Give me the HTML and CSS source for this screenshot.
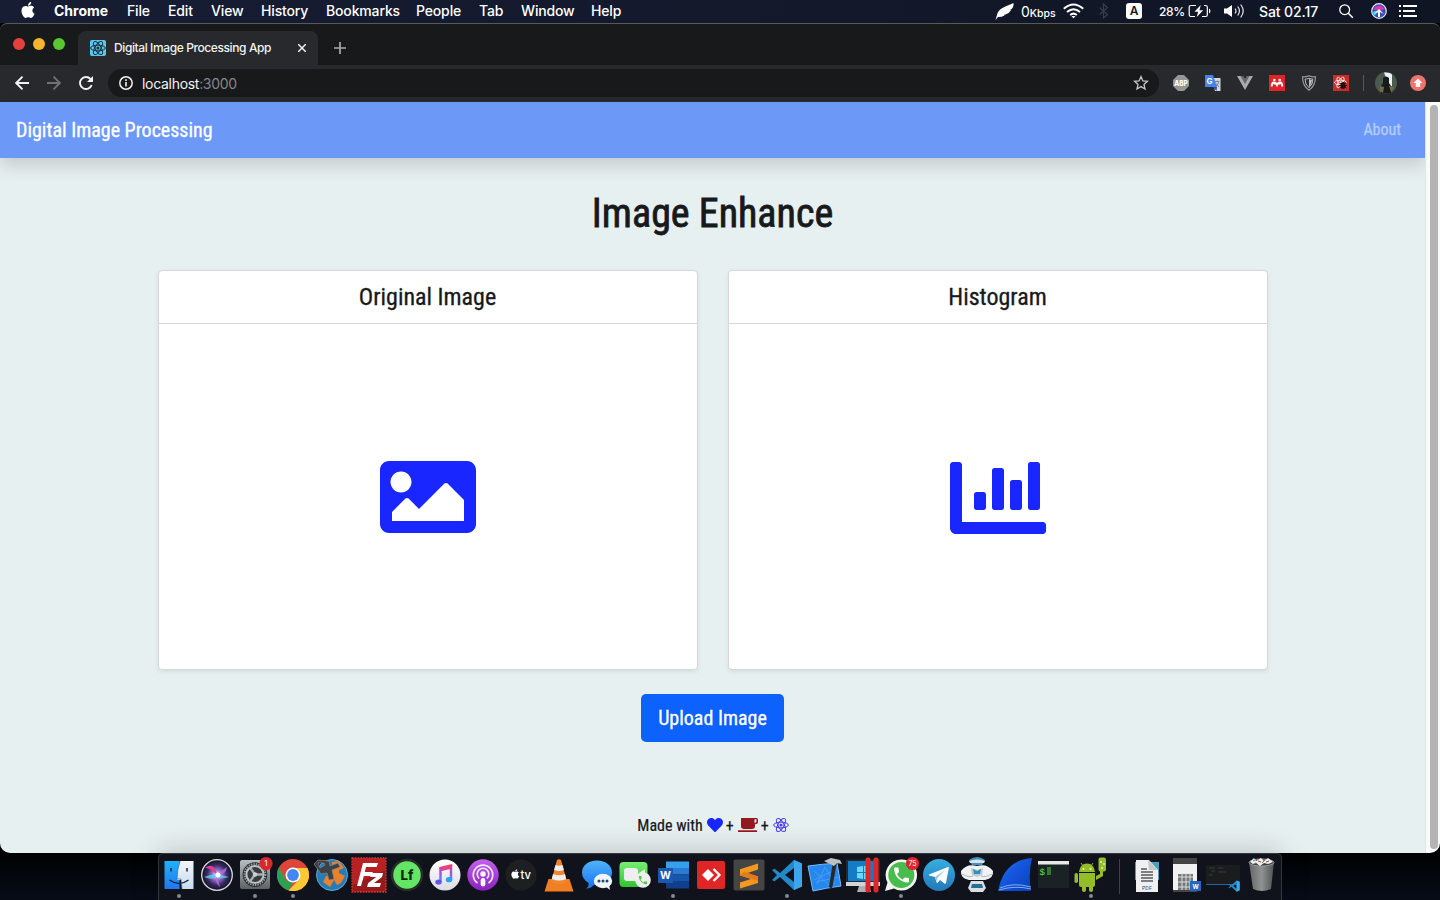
FILE: index.html
```
<!DOCTYPE html>
<html lang="en">
<head>
<meta charset="utf-8">
<title>Digital Image Processing App</title>
<link rel="stylesheet" href="styles.css">
</head>
<body>
<svg class="defs" aria-hidden="true">
  <defs>
    <symbol id="react" viewBox="0 0 24 24"><g fill="none" stroke="currentColor" stroke-width="1.5"><ellipse cx="12" cy="12" rx="11" ry="4.3"/><ellipse cx="12" cy="12" rx="11" ry="4.3" transform="rotate(60 12 12)"/><ellipse cx="12" cy="12" rx="11" ry="4.3" transform="rotate(120 12 12)"/></g><circle cx="12" cy="12" r="2.3" fill="currentColor"/></symbol>
    <symbol id="phone" viewBox="0 0 24 24"><path fill="currentColor" d="M6.620 10.790c1.440 2.830 3.760 5.140 6.590 6.590l2.200-2.200c.27-.27.67-.36 1.020-.24 1.120.37 2.330.57 3.570.57.55 0 1 .45 1 1V20c0 .55-.45 1-1 1-9.390 0-17-7.610-17-17 0-.55.45-1 1-1h3.500c.55 0 1 .45 1 1 0 1.250.2 2.450.57 3.570.11.35.03.74-.25 1.020z"/></symbol>
    <symbol id="apple" viewBox="0 0 24 24"><path fill="currentColor" d="M12.152 6.896c-.948 0-2.415-1.078-3.960-1.040-2.040.027-3.910 1.183-4.961 3.014-2.117 3.675-.546 9.103 1.519 12.090 1.013 1.454 2.208 3.090 3.792 3.039 1.520-.065 2.090-.987 3.935-.987 1.831 0 2.350.987 3.960.948 1.637-.026 2.676-1.480 3.676-2.948 1.156-1.688 1.636-3.325 1.662-3.415-.039-.013-3.182-1.221-3.220-4.857-.026-3.040 2.480-4.494 2.597-4.559-1.429-2.090-3.623-2.324-4.390-2.376-2-.156-3.675 1.090-4.610 1.090zM15.530 3.830c.843-1.012 1.400-2.427 1.245-3.830-1.207.052-2.662.805-3.532 1.818-.78.896-1.454 2.338-1.273 3.714 1.338.104 2.715-.688 3.559-1.701"/></symbol>
    <symbol id="vscode" viewBox="0 0 32 32"><path d="M23 1 9 14 3.500 9.700 1 11l5 5-5 5 2.500 1.300L9 18l14 13 8-3.500v-23zM23 9v14l-9-7z" fill="#2489ca" fill-rule="evenodd"/><path d="M23 1v30l8-3.500v-23z" fill="#3ba5ee"/></symbol>
    <linearGradient id="gBlue" x2="0" y2="1"><stop stop-color="#4eb4fb"/><stop offset="1" stop-color="#1973f0"/></linearGradient>
    <linearGradient id="gGreen" x2="0" y2="1"><stop stop-color="#77ee73"/><stop offset="1" stop-color="#2fc52e"/></linearGradient>
    <linearGradient id="gPurple" x2="0" y2="1"><stop stop-color="#c560ee"/><stop offset="1" stop-color="#8a21bf"/></linearGradient>
    <linearGradient id="gWhite" x2="0" y2="1"><stop stop-color="#fff"/><stop offset="1" stop-color="#dcdce4"/></linearGradient>
    <linearGradient id="gMetal" x2="0" y2="1"><stop stop-color="#b9bec2"/><stop offset="1" stop-color="#5d6265"/></linearGradient>
    <linearGradient id="gNote" x2="0" y2="1"><stop stop-color="#fa3c69"/><stop offset=".5" stop-color="#a354e8"/><stop offset="1" stop-color="#2aa5f5"/></linearGradient>
    <linearGradient id="gFin" x2="0" y2="1"><stop stop-color="#1fb2fa"/><stop offset="1" stop-color="#2277f0"/></linearGradient>
    <linearGradient id="gFin2" x2="0" y2="1"><stop stop-color="#f2f5fa"/><stop offset="1" stop-color="#c9dbee"/></linearGradient>
    <linearGradient id="gShark" x2="1" y2="1"><stop stop-color="#2d8cf5"/><stop offset=".4" stop-color="#1558e0"/><stop offset="1" stop-color="#0b3dbd"/></linearGradient>
    <linearGradient id="gTele" x2="0" y2="1"><stop stop-color="#37aee2"/><stop offset="1" stop-color="#2378b8"/></linearGradient>
    <linearGradient id="gBin"><stop stop-color="#666"/><stop offset=".5" stop-color="#8e9292"/><stop offset="1" stop-color="#505354"/></linearGradient>
    <radialGradient id="gSiri"><stop stop-color="#fff"/><stop offset=".3" stop-color="#9b7bd0"/><stop offset=".65" stop-color="#3b2a66"/><stop offset="1" stop-color="#0d1420"/></radialGradient>
  </defs>
</svg>
<div class="desktop">
  <header class="menubar">
    <svg class="apple"><use href="#apple"/></svg>
    <nav class="menus"><b>Chrome</b><span>File</span><span>Edit</span><span>View</span><span>History</span><span>Bookmarks</span><span>People</span><span>Tab</span><span>Window</span><span>Help</span></nav>
    <div class="status">
      <svg width="20" height="18" viewBox="0 0 20 18"><path d="M.5 18 2 13C3 7 9 5 18.500 1q.5 4-2.500 6.500l-1 .3 1 .5q-2 3.500-6 4.500l-1-.2.500.900Q7 15 3 15z" fill="#fff"/></svg>
      <span class="net">0<small>Kbps</small></span>
      <svg width="21" height="16" viewBox="0 0 21 16" fill="none" stroke="#fff" stroke-width="2"><path d="M.8 5.800q9.700-8.500 19.400 0M4 9q6.500-5.600 13 0M7.200 12q3.300-2.700 6.600 0"/><path d="m8.500 13 2 2.500 2-2.500z" fill="#fff" stroke="none"/></svg>
      <svg width="12" height="16" viewBox="0 0 12 16" fill="none" stroke="#3a3e4b" stroke-width="1.200"><path d="m1.500 4.500 8 7-4 3.500V1l4 3.500-8 7"/></svg>
      <span class="lang">A</span>
      <span class="pct">28%</span>
      <svg width="24" height="14" viewBox="0 0 24 14"><path d="M8 1.500H3Q1.200 1.500 1.200 3v8q0 1.500 1.800 1.500h4M14 12.500h3.500q1.800 0 1.800-1.500V3q0-1.500-1.800-1.500H16" fill="none" stroke="#fff" stroke-width="1.200"/><path d="M12.800 1 6.500 7.700h3.700L8.700 13l6.500-6.700h-3.800zM21 4.500c1.900.8 1.900 4.200 0 5z" fill="#fff"/></svg>
      <svg width="22" height="16" viewBox="0 0 22 16"><path d="M0 5.500h3L8 2v12l-5-3.500H0z" fill="#fff"/><path d="M11 5.500q2 2.500 0 5M13.700 3.500q3.500 4.500 0 9M16.700 1.500q5 6.500 0 13" fill="none" stroke="#e4e5ea" stroke-width="1.200"/></svg>
      <span class="clock">Sat 02.17</span>
      <svg width="16" height="16" viewBox="0 0 16 16" fill="none" stroke="#fff" stroke-width="1.300"><circle cx="6.700" cy="6.700" r="4.900"/><path d="m10.300 10.300 4.500 4.500" stroke-width="1.600"/></svg>
      <svg width="16" height="16" viewBox="0 0 16 16"><circle cx="8" cy="8" r="7.300" fill="#3d4cb0" stroke="#e8e8f4" stroke-width="1.200"/><path d="M2 6q6-7 12 0L8 8z" fill="#d63bad"/><path d="M2 10q0-3 6-2l-5 5z" fill="#3bd3e8"/><path d="m8 6 5 5-4-2v5H7V9l-4 2z" fill="#fff"/></svg>
      <svg width="19" height="14" viewBox="0 0 19 14" stroke="#fff" stroke-width="2"><path d="M0 2h2M0 7h2M0 12h2M4 2h14M4 7h12M4 12h14"/></svg>
    </div>
  </header>

  <section class="window">
    <div class="tabstrip">
      <div class="lights"><i class="red"></i><i class="yellow"></i><i class="green"></i></div>
      <div class="tab">
        <span class="favicon"><svg width="16" height="16"><use href="#react"/></svg></span>
        <span class="tab-title">Digital Image Processing App</span>
        <svg class="close" width="8" height="8" viewBox="0 0 8 8"><path d="m0 0 8 8M8 0 0 8" stroke="#f0f0f0" stroke-width="1.500"/></svg>
      </div>
      <svg class="plus" width="12" height="12" viewBox="0 0 12 12"><path d="M6 0v12M0 6h12" stroke="#a6abb0" stroke-width="1.700"/></svg>
    </div>
    <div class="toolbar">
      <div class="navicons">
        <svg width="14" height="14" viewBox="0 0 14 14" fill="none" stroke="#f1f3f4" stroke-width="1.900"><path d="M14 7H1.500M7.500 .7 1.200 7l6.300 6.300"/></svg>
        <svg width="14" height="14" viewBox="0 0 14 14" fill="none" stroke="#6f7275" stroke-width="1.900"><path d="M0 7h12.500M6.500 .7 12.800 7l-6.300 6.300"/></svg>
        <svg width="14" height="14" viewBox="0 0 14 14"><path d="M11.500 3A6 6 0 1 0 12.700 9" fill="none" stroke="#f1f3f4" stroke-width="1.900"/><path d="M14 0v6H8z" fill="#f1f3f4"/></svg>
      </div>
      <div class="omnibox">
        <svg width="14" height="14" viewBox="0 0 14 14"><circle cx="7" cy="7" r="6.200" fill="none" stroke="#f1f3f4" stroke-width="1.500"/><path d="M6.200 6h1.600v4.500H6.200zM6.200 3.300h1.600v1.600H6.200z" fill="#f1f3f4"/></svg>
        <span class="url">localhost<em>:3000</em></span>
        <svg class="star" width="16" height="16" viewBox="0 0 16 16"><path d="m8 1.600 1.900 4.300 4.500.4-3.400 3.100 1 4.600-4-2.400L4 14l1-4.600-3.400-3.100 4.500-.4z" fill="none" stroke="#c4c6c9" stroke-width="1.300"/></svg>
      </div>
      <div class="extensions">
        <svg viewBox="0 0 16 16"><path d="M5 0h6l5 5v6l-5 5H5l-5-5V5z" fill="#969696"/><text x="1.300" y="10.700" font-size="7.500" font-weight="800" textLength="13.500" lengthAdjust="spacingAndGlyphs" fill="#fff">ABP</text></svg>
        <svg viewBox="0 0 16 16"><path d="M7 3h8.500v13H10z" fill="#d6d8db"/><path d="M9.500 6.500h5M12 5.500v1M10 12q3.500-2 3.500-5M10.500 8l3.500 4" stroke="#708095" fill="none"/><path d="M0 0h8l4 12H0z" fill="#4584ee"/><path d="m8 12 3.500 4L12 12z" fill="#2b50a5"/><text x="1.500" y="9" font-size="8" font-weight="700" fill="#fff">G</text></svg>
        <svg viewBox="0 0 16 16"><path d="M0 1h6l2 3.500L10 1h6L8 15z" fill="#aaa"/><path d="M3.500 1H6l2 3.500L10 1h2.500L8 9z" fill="#646668"/></svg>
        <svg viewBox="0 0 16 16"><path d="M0 0h16v16H0z" fill="#e22428"/><g fill="none" stroke="#fff" stroke-width="1.900"><path d="M2.800 11.500q-.2-4 2.200-4 2 0 3 2.500 1-2.500 3-2.500 2.400 0 2.200 4M5.500 9.500v-2M10.500 9.500v-2"/></g><circle cx="5.300" cy="5" r="1.300" fill="#fff"/><circle cx="10.700" cy="5" r="1.300" fill="#fff"/></svg>
        <svg viewBox="0 0 16 16"><path d="M8 .7q3.500 1.600 6.500 1.100Q14.500 11 8 15.300 1.500 11 1.500 1.800 4.500 2.300 8 .7z" fill="none" stroke="#999" stroke-width="1.200"/><path d="M8 3.200q2.500 1 4 .9Q12 9.500 8 12.700 4 9.500 4 4.100q1.500.1 4-.9z" fill="none" stroke="#bbb"/><path d="M8 4v8q3-3 3-7z" fill="#bbb"/></svg>
        <svg viewBox="0 0 16 16"><path d="M0 0h16v16H0z" fill="#cc2c29"/><use href="#react" x="1" y="1" width="13" height="13" color="#fff"/><ellipse cx="10" cy="10.500" rx="2.500" ry="3.500" fill="#210e10"/><path d="m6.500 8 7 5M6.500 13l7-5M6 10.500h8" stroke="#210e10"/></svg>
      </div>
      <i class="divider"></i>
      <svg class="avatar" viewBox="0 0 22 22"><circle cx="11" cy="11" r="11" fill="#4c5b50"/><path d="M9 .5q6-.5 8 2V14h-3z" fill="#edf3f4"/><path d="M8 6q3-3 6 0v5l2 3v7.500H6V14l2-3z" fill="#191b18"/><path d="m5 14 4 1-1 6-3-2zM14 14l5 1-3 5z" fill="#716e4b"/></svg>
      <svg class="update" viewBox="0 0 16 16"><circle cx="8" cy="8" r="8" fill="#ee756d"/><path d="m8 3.500 4.500 4.500h-2.300v4H5.800V8H3.500z" fill="#fff"/></svg>
    </div>

    <div class="viewport">
      <main class="page">
        <nav class="navbar"><a class="brand">Digital Image Processing</a><a class="about">About</a></nav>
        <h1>Image Enhance</h1>
        <div class="cards">
          <article class="card"><h4>Original Image</h4><div class="card-body"><svg class="img-icon" viewBox="0 0 512 512"><path d="M464 448H48c-26.510 0-48-21.490-48-48V112c0-26.510 21.490-48 48-48h416c26.510 0 48 21.490 48 48v288c0 26.510-21.490 48-48 48zM112 120c-30.928 0-56 25.072-56 56s25.072 56 56 56 56-25.072 56-56-25.072-56-56-56zM64 384h384V272l-87.515-87.515c-4.686-4.686-12.284-4.686-16.971 0L208 320l-55.515-55.515c-4.686-4.686-12.284-4.686-16.971 0L64 336v48z"/></svg></div></article>
          <article class="card"><h4>Histogram</h4><div class="card-body"><svg viewBox="0 0 512 512"><path d="M332.800 320h38.400c6.400 0 12.800-6.400 12.800-12.800V172.800c0-6.400-6.400-12.800-12.800-12.800h-38.400c-6.400 0-12.800 6.400-12.800 12.800v134.400c0 6.400 6.400 12.800 12.800 12.800zm96 0h38.400c6.400 0 12.800-6.400 12.800-12.800V76.800c0-6.400-6.400-12.800-12.800-12.800h-38.400c-6.400 0-12.800 6.400-12.800 12.800v230.400c0 6.400 6.400 12.800 12.800 12.800zm-288 0h38.400c6.400 0 12.800-6.400 12.800-12.800v-70.400c0-6.400-6.400-12.800-12.800-12.800h-38.400c-6.400 0-12.800 6.400-12.800 12.800v70.400c0 6.400 6.400 12.800 12.800 12.800zm96 0h38.400c6.400 0 12.800-6.400 12.800-12.800V108.800c0-6.400-6.400-12.800-12.800-12.800h-38.400c-6.400 0-12.800 6.400-12.800 12.800v198.400c0 6.400 6.400 12.800 12.800 12.800zM496 384H64V80c0-8.840-7.160-16-16-16H16C7.160 64 0 71.160 0 80v336c0 17.670 14.330 32 32 32h464c8.840 0 16-7.160 16-16v-32c0-8.840-7.160-16-16-16z"/></svg></div></article>
        </div>
        <button class="upload">Upload Image</button>
        <footer class="credit">
          <span>Made with</span>
          <svg width="16" height="16" viewBox="0 0 512 512"><path fill="#1a26ff" d="M462.300 62.600C407.500 15.900 326 24.300 275.700 76.200L256 96.500l-19.700-20.300C186.100 24.300 104.500 15.900 49.700 62.600c-62.800 53.600-66.100 149.800-9.900 207.900l193.500 199.800c12.500 12.900 32.800 12.900 45.300 0l193.500-199.800c56.300-58.100 53-154.300-9.800-207.900z"/></svg>
          <span>+</span>
          <svg width="20" height="14" viewBox="0 0 20 14"><path fill="#931a20" fill-rule="evenodd" d="M3 0h15.500Q20 0 20 1.600v2.200Q20 6.300 17 6.300V8q0 3-3 3H6Q3 11 3 8zM16.500 1.300v3.800q2 0 2-1.800v-2zM0 12.200h19V14H0z"/></svg>
          <span>+</span>
          <svg width="16" height="16" color="#4a3be8"><use href="#react"/></svg>
        </footer>
      </main>
      <div class="scrollbar"><i></i></div>
    </div>
  </section>

  <div class="dock">
    <svg class="run"><path d="M4.500 7h15v28h-15z" fill="url(#gFin)"/><path d="M20 7h13.500v28H22l-1-9h-4q0-10 3-19z" fill="url(#gFin2)"/><path d="M11 14v3.500M27 14v3.500M9.500 26q9.500 7 19 0" fill="none" stroke="#12233c" stroke-width="1.500"/><path d="M20 7q-3 9-3 18h4l1 10" fill="none" stroke="#2c6fb0" stroke-width=".7"/><circle cx="19" cy="42" r="2"/></svg>
    <svg><circle cx="19" cy="21" r="15.300" fill="url(#gSiri)" stroke="#dcdce2" stroke-width="1.300"/><path d="M7 14q9-7 12 7Q13 14 7 14z" fill="#e3398e"/><path d="M6 23q10-5 25 0-11 3-12-1-4 5-13 1z" fill="#59d3e6" opacity=".8"/><path d="m19 20 10-7q-1 8-10 8l3 12q-6-4-3-13" fill="#b36eea" opacity=".8"/><circle cx="20" cy="21" r="2.500" fill="#fff"/></svg>
    <svg class="run"><rect x="4" y="6" width="30" height="29" rx="2" fill="url(#gMetal)"/><circle cx="19" cy="20.500" r="12.300" fill="#222529"/><circle cx="19" cy="20.500" r="10.500" fill="none" stroke="#999ea2" stroke-width="2" stroke-dasharray="1.500 1"/><circle cx="19" cy="20.500" r="8.600" fill="#383c3f" stroke="#c0c4c7" stroke-width="2"/><path d="m19 20.500-5-7m5 7h8.500m-8.500 0-5 7" stroke="#a9adaf" stroke-width="2.300"/><circle cx="19" cy="20.500" r="2.200" fill="#cfd2d4"/><circle cx="30" cy="9.500" r="6.600" fill="#dd252e"/><text x="30" y="12.300" font-size="8" text-anchor="middle" fill="#fff">1</text><circle cx="19" cy="42" r="2"/></svg>
    <svg class="run"><circle cx="19" cy="21" r="16" fill="#df463a"/><path d="M5 13.300 12.500 27 19 28l-4.500 8.400A16 16 0 0 1 5 13.300z" fill="#2da153"/><path d="M19 14h14.500a16 16 0 0 1-19 22.400L25.500 25z" fill="#fcc934"/><circle cx="19" cy="21" r="7.500" fill="#fff"/><circle cx="19" cy="21" r="5.900" fill="#4386f4"/><circle cx="19" cy="42" r="2"/></svg>
    <svg><circle cx="20" cy="21" r="15.500" fill="#277cb7" stroke="#5ba9d5"/><path d="m20 8 7-1 5 7-5 2v3l6 3-4 7-4 2-3-5-4 7-7-5 3-6 6-1z" fill="#e9812d"/><path d="m2 10 4-4 11 1 1 5 8-3 2 4-8 3 2 9-5 1-2-7-6 1zM6 9l2 5 5-3-1-2z" fill="#3d4145" stroke="#858786" stroke-width=".7" fill-rule="evenodd"/></svg>
    <svg><rect x="2" y="4" width="34" height="34" fill="#951a1c" stroke="#df393b" stroke-width="1.300" stroke-dasharray="1.600 1.200"/><path d="M3 4h32v12L3 31z" fill="#c62528" opacity=".7"/><path d="m7 32 6-23h15l-1.400 4H16l-1.200 5h8l-1.200 4h-7.800L11 32zM21 19h12l-1 4-8 6h7l-1.300 4H17l1.200-4 8-6h-6z" fill="#fff"/></svg>
    <svg><circle cx="19" cy="21" r="15" fill="#64e565" stroke="#272d27" stroke-width="2.500"/><text x="12.500" y="25.700" font-size="13" font-weight="800" textLength="13" lengthAdjust="spacingAndGlyphs" fill="#10270f">Lf</text></svg>
    <svg><circle cx="19" cy="21" r="15.500" fill="url(#gWhite)"/><path d="M14.500 28V14L25 11.500V26M14.500 16 25 13.500" fill="none" stroke="url(#gNote)" stroke-width="2.500"/><ellipse cx="12.500" cy="28" rx="3.200" ry="2.600" fill="#6355e9"/><ellipse cx="23" cy="25.700" rx="3.200" ry="2.600" fill="#24a4f3"/></svg>
    <svg><circle cx="19" cy="21" r="15.700" fill="url(#gPurple)"/><g fill="none" stroke="#f2e6f8" stroke-width="1.600"><path d="M13.500 29a9.800 9.800 0 1 1 11 0M15.200 24.500a5.800 5.800 0 1 1 7.600 0"/></g><circle cx="19" cy="20" r="2.700" fill="#fff"/><rect x="16.700" y="24" width="4.600" height="8.500" rx="2.300" fill="#fff"/></svg>
    <svg><circle cx="19" cy="21" r="15.500" fill="#1e1f21"/><use href="#apple" x="8.500" y="15" width="9.500" height="10" color="#fff"/><text x="18.500" y="25" font-size="12" font-weight="500" fill="#fff" textLength="10.500" lengthAdjust="spacingAndGlyphs">tv</text></svg>
    <svg><path d="M8.500 25h21l4 12.500h-29z" fill="#f17e23"/><path d="M17 6q2-1.500 4 0l6 22q-8 5-16 0z" fill="#f2852b"/><path d="m15.500 11-1.400 5q5 2 9.800 0l-1.400-5q-3.500 1.500-7 0M13 20l-1.200 5q7.500 3 14.400 0L25 20q-6 2.500-12 0" fill="#eee"/></svg>
    <svg><path d="M19 6.500c9 0 15 5 15 12S28 31 19 31l-3-.3Q12 35 8 34.500q3-2 2.500-5.500Q4 25 4 18.500c0-7 6-12 15-12z" fill="url(#gBlue)"/><ellipse cx="25" cy="27" rx="9.200" ry="7.200" fill="#eef5fc"/><path d="m27 32 5 4-1-6z" fill="#eef5fc"/><g fill="#284968"><circle cx="21" cy="27" r="1.500"/><circle cx="25" cy="27" r="1.500"/><circle cx="29" cy="27" r="1.500"/></g></svg>
    <svg><rect x="3.500" y="8" width="28" height="25" rx="4" fill="url(#gGreen)"/><rect x="8" y="14" width="14" height="13" rx="3" fill="#eee"/><path d="m23 19 6-4v10l-6-4z" fill="#eee"/><circle cx="27" cy="26" r="7.800" fill="#eee"/><use href="#phone" x="21.500" y="20.500" width="11" height="11" color="#49cc43"/></svg>
    <svg class="run"><path d="M12 7.500h23V14H12z" fill="#35a0ec"/><path d="M12 14h23v6.500H12z" fill="#2b7bd4"/><path d="M12 20.500h23V27H12z" fill="#1755a8"/><path d="M12 27h23v7.500H12z" fill="#103f8d"/><rect x="4" y="14" width="15" height="15" rx="1" fill="#1759b3"/><text x="11.500" y="25.200" font-size="10.500" font-weight="700" text-anchor="middle" fill="#fff">W</text><circle cx="19" cy="42" r="2"/></svg>
    <svg><rect x="5" y="7" width="28" height="28" rx="2" fill="#df2527"/><path d="m16 15-6 6 6 6 6-6z" fill="#fff"/><path d="m20 15 6 6-6 6M24.500 15l6 6-6 6" fill="none" stroke="#df2527" stroke-width="1.500"/><path d="m21.500 15 6 6-6 6" fill="none" stroke="#fff" stroke-width="2.300"/></svg>
    <svg><rect x="3.500" y="5.500" width="31" height="31" rx="2" fill="#454545"/><path d="M28 9.500v6l-11 3.700 11 3.300V29l-18 5.500v-6l11-3.600-11-3.400v-6.300z" fill="#f69720"/><path d="m10 21.500 18 5.500v-4.500l-14-5z" fill="#e07c19"/></svg>
    <svg class="run"><use href="#vscode" x="3" y="5" width="32" height="32"/><circle cx="19" cy="42" r="2"/></svg>
    <svg><path d="M2 12q15-2 29-3l4 23q-15 2-28 5z" fill="#2488ed" stroke="#75bafa"/><path d="m11 30 8-17 10 17M10 28l23-5M8 17l16 15M31 15 8 26" fill="none" stroke="#4f9ff2" stroke-width=".8"/><path d="m27 7 4 1-5 27-3-2z" fill="#26292b"/><path d="m18 7 7-3 9 2 2 4-5-1-3 3z" fill="#bdc1c4"/></svg>
    <svg><rect x="2" y="5.500" width="34" height="24" fill="#222932"/><rect x="4" y="7" width="30" height="20" fill="#147cc5"/><path d="m13 13 6-1v6h-6zm7-1 6-1v7h-6zm-7 7h6v6l-6-1zm7 0h6v7l-6-1z" fill="#6fd6fa"/><path d="M2 28h34v4H2z" fill="#d1d5d8"/><path d="m15 32-2 6h14l-2-6z" fill="#aaafb1"/><rect x="21.500" y="3.500" width="5" height="35" rx="2" fill="#e02529"/><rect x="29.500" y="3.500" width="5" height="35" rx="2" fill="#e02529"/></svg>
    <svg class="run"><path d="M19 5.500a15.500 15.500 0 1 1-7 29L3 37l2.500-8.500A15.500 15.500 0 0 1 19 5.500z" fill="#f2f4ef"/><circle cx="19.300" cy="21" r="13" fill="#48bd4d"/><use href="#phone" x="9.500" y="11" width="20" height="20" color="#fff"/><circle cx="30.500" cy="9.500" r="6.600" fill="#dc252e"/><text x="30.500" y="12" font-size="7" text-anchor="middle" fill="#fff">75</text><circle cx="19" cy="42" r="2"/></svg>
    <svg><circle cx="19" cy="21" r="16" fill="url(#gTele)"/><path d="m9 20.500 19-7.500q1-.2.800 1L26 29q-.3 1-1.500.4L20 26l-2.500 2.800q-.7.500-1-.5L15 23l-5.800-1.500q-.8-.4-.2-1z" fill="#fff"/><path d="m15 23 10-7-7.500 8-.5 4.300z" fill="#9dc9e3"/></svg>
    <svg><path d="M11 6q8-6 16 0l-3 5H14z" fill="#4293bf"/><path d="M11 7q8-3 16 0l-1 2H12z" fill="#d9e3e8"/><path d="M3 17q6-8 16-5 10-3 16 5 1 7-8 9H11q-9-2-8-9z" fill="#eff2f3"/><path d="m13 14 6 2 6-2-1 7-5 2-5-2z" fill="#b9cbd5"/><path d="m15 15 4 2 4-2-1 5h-6z" fill="#348dbd"/><path d="M4 20q7 4 11 2M34 20q-7 4-11 2" fill="none" stroke="#adb6bb"/><path d="M13 27h12l3 7-3 4H13l-3-4z" fill="#d7dfe2"/><path d="M14 30h10l1 4H13z" fill="#2a6b91"/></svg>
    <svg><path d="M2 37Q8 6 36 4q-4 16-1 33z" fill="url(#gShark)"/><path d="M4 34q13-6 31-1M3 36q16-5 32-1" fill="none" stroke="#8fb9f7" stroke-width=".9"/></svg>
    <svg><rect x="4" y="7" width="31" height="27" fill="#1b2226"/><path d="M4 7h31v3.500H4z" fill="#e8e9e8"/><text x="5.500" y="20.500" font-size="9" class="mono" fill="#5de346">$</text><path d="M13 13h4v8h-4z" fill="#2e7c25"/></svg>
    <svg class="run"><g fill="#95bd2a"><path d="M7 18q1-8.500 8-8.500t8 8.500z"/><path d="M7 19h16v12q0 2-2 2H9q-2 0-2-2z"/><rect x="2.500" y="19" width="3.500" height="10" rx="1.700"/><path d="m24 22 4-2v-3h3v5l-7 4z"/><rect x="10" y="30" width="4" height="8" rx="2"/><rect x="17" y="30" width="4" height="8" rx="2"/><path d="m11 12-2-3M19 12l2-3" stroke="#95bd2a"/><rect x="26.500" y="3.500" width="7.500" height="14" rx="2"/></g><g fill="#e5f4c4"><circle cx="11.500" cy="15" r="1"/><circle cx="18.500" cy="15" r="1"/><circle cx="29" cy="8" r="1"/><circle cx="32" cy="10" r="1"/><circle cx="30" cy="14" r="1"/></g><circle cx="19" cy="42" r="2"/></svg>
    <i class="dock-sep"></i>
    <svg><path d="M7 8h24v18H7z" fill="#4f9dc3"/><path d="M8 6h13l9 10v22H8z" fill="#f0f0f0"/><path d="m20 6 1 10h9z" fill="#c6c9ca"/><path d="M13 15h6M13 18h12M13 21h12M13 24h12M13 27h12" stroke="#7c7f81" stroke-width="2"/><text x="19" y="35.500" font-size="5" text-anchor="middle" fill="#444">PDF</text></svg>
    <svg><rect x="7" y="4" width="24" height="34" fill="#f1f1f1"/><path d="M7 4h24v6H7zM7 36h24v2H7z" fill="#444"/><path d="M12 20h15v16H12z" fill="#75797a"/><path d="M12 23h15M12 28h15M12 33h15M16 19v17M20 19v17M24 19v17" stroke="#dcdddd"/><rect x="24" y="27" width="11" height="10" fill="#2366c3"/><text x="29.500" y="34.500" font-size="6" text-anchor="middle" font-weight="700" fill="#fff">W</text></svg>
    <svg><rect x="2" y="11" width="34" height="20" fill="#1a1c1e"/><path d="M5 14h6M7 17h4M5 21h4M14 14h5M14 18h8" stroke="#353b40"/><path d="M2 30h34v1H2z" fill="#176baa"/><use href="#vscode" x="24" y="26" width="12" height="12"/></svg>
    <svg><path d="M7 8h25l-3 27q-9 4-18 0z" fill="url(#gBin)"/><ellipse cx="19.500" cy="8.500" rx="12.500" ry="3.500" fill="#3b3e3f" stroke="#999"/><path d="m8 8 4-4 2 3 5-3 3 3 4-3 5 4-5 2-4-1-4 3-4-3-3 1z" fill="#eee"/><path d="m16 7 3 1M24 8l3-1M13 9l2 1" stroke="#ac4234"/><path d="m20 9 2-2M11 7l2-1" stroke="#3b87a8"/></svg>
  </div>
</div>
</body>
</html>
```
FILE: styles.css
```
* { box-sizing: border-box; }
body { margin: 0; width: 1440px; height: 900px; overflow: hidden; font-family: Inter, "Liberation Sans", sans-serif; }
svg { display: block; flex: none; }
.defs { position: absolute; width: 0; height: 0; }
.desktop { position: relative; width: 1440px; height: 900px; background: linear-gradient(#15182c 0 23px, #000 23px 850px, #070c17 900px); }

.menubar { height: 23px; padding-bottom: 1px; display: flex; align-items: center; color: #fff; font-size: 14px; background: linear-gradient(90deg, #171d33, #101524); }
.apple { width: 16px; height: 16px; margin: -2px 18px 0 20px; }
.menus { display: grid; grid-template-columns: 73px 41px 43px 50px 65px 90px 63px 42px 70px 60px; width: 941px; margin-top: -1px; font-weight: 500; letter-spacing: -.15px; white-space: nowrap; }
.menus b { font-weight: 700; letter-spacing: 0; }
.status { display: grid; align-items: center; grid-template-columns: 26px 42px 35px 28px 33px 29px 36px 35px 79px 33px 28px 19px; height: 22px; white-space: nowrap; }
.net { font-size: 14px; }
.net small { font-size: 10.5px; font-weight: 500; }
.lang { width: 16px; height: 16px; border-radius: 3px; background: #fff; color: #14182a; font-size: 12px; font-weight: 600; line-height: 16px; text-align: center; }
.pct { font-size: 12px; font-weight: 500; letter-spacing: -.3px; }
.clock { font-weight: 500; letter-spacing: -.1px; }

.window { height: 830px; border-top: 1px solid #595a58; border-radius: 7px 7px 10px 10px; overflow: hidden; background: #18191b; }
.tabstrip { height: 41px; display: flex; align-items: center; }
.lights { display: flex; gap: 8px; margin: 0 13px 2px; }
.lights i { width: 12px; height: 12px; border-radius: 50%; }
.red { background: #e4413c; }
.yellow { background: #f6b42b; }
.green { background: #57c732; }
.tab { width: 240px; height: 34px; margin-top: 7px; padding: 0 12px; display: flex; align-items: center; background: #28292c; border-radius: 8px 8px 0 0; color: #f1f3f4; font-size: 12px; }
.favicon { width: 16px; height: 16px; background: #53c9f3; border-radius: 2px; color: #222d35; }
.tab-title { margin: -2px 0 0 8px; width: 157px; white-space: nowrap; letter-spacing: -.4px; font-weight: 500; }
.close { margin-left: auto; }
.plus { margin: 7px 0 0 16px; }
.toolbar { height: 37px; padding-bottom: 1px; display: flex; align-items: center; background: #28292c; }
.navicons { display: flex; gap: 18px; padding: 0 15px; width: 108px; }
.omnibox { width: 1051px; height: 28px; padding: 0 10px 0 11px; display: flex; align-items: center; background: #18191b; border-radius: 14px; color: #f1f3f4; font-size: 14px; }
.url { margin-left: 9px; letter-spacing: -.3px; }
.url em { color: #85888a; font-style: normal; }
.star { margin-left: auto; }
.extensions { display: flex; gap: 16px; margin-left: 14px; }
.extensions svg { width: 16px; height: 16px; }
.divider { width: 1px; height: 16px; margin: 0 11px 0 14px; background: #55575a; }
.avatar { width: 22px; height: 22px; }
.update { width: 16px; height: 16px; margin-left: 13px; }

.viewport { display: flex; height: 751px; }
.page { width: 1425px; background: #e7f0f1; color: #17191c; font-family: "Roboto Condensed", Roboto, sans-serif; font-stretch: 75%; display: flex; flex-direction: column; align-items: center; }
.navbar { width: 100%; height: 56px; flex: none; padding: 0 24px 0 16px; display: flex; align-items: center; justify-content: space-between; background: #6c98f7; color: #fff; box-shadow: 0 8px 16px rgba(0,0,0,.15); }
.brand { font-size: 20px; font-weight: 400; -webkit-text-stroke: .3px; }
.about { margin-top: -1px; font-size: 16px; color: #b5cbfb; font-weight: 400; -webkit-text-stroke: .3px; }
h1 { margin: 32px 0; font-size: 40px; line-height: 48px; font-weight: 400; -webkit-text-stroke: .8px; }
.cards { display: flex; gap: 30px; }
.card { width: 540px; height: 400px; background: #fff; border: 1px solid #d5d8d9; border-radius: 4px; box-shadow: 0 2px 4px rgba(0,0,0,.075); }
.card h4 { margin: 0; height: 53px; line-height: 52px; border-bottom: 1px solid #d5d8d9; text-align: center; font-size: 24px; font-weight: 400; -webkit-text-stroke: .3px; }
.card-body { height: 345px; display: grid; place-items: center; }
.card-body svg { width: 96px; height: 96px; margin-top: 3px; fill: #1a26ff; }
.card-body .img-icon { margin-top: 1px; }
.upload { margin: 24px 0 0; width: 143px; height: 48px; border: 0; border-radius: 5px; background: #0d61fd; color: #fff; font: inherit; font-size: 20px; font-weight: 400; -webkit-text-stroke: .3px; }
.credit { margin-top: 73px; height: 20px; display: flex; align-items: center; gap: 4px; font-size: 16px; -webkit-text-stroke: .2px; }
.credit span + svg { margin-right: -1px; }
.scrollbar { width: 15px; padding: 3px 3px 4px 4px; background: #fafafa; border-left: 1px solid #e2e4e4; }
.scrollbar i { display: block; width: 8px; height: 744px; border-radius: 4px; background: #b4b4b4; }

.dock { position: absolute; left: 158px; top: 853px; width: 1124px; height: 47px; padding-left: 1px; border: 1px solid #32373d; border-bottom: 0; border-radius: 5px 5px 0 0; background: #10131b; display: flex; box-shadow: 0 0 28px rgba(0,0,0,.22); }
.dock svg { width: 38px; height: 46px; overflow: visible; }
.run > circle:last-child { fill: #85888d; }
.dock-sep { width: 1px; height: 35px; margin: 5px 8px 0 9px; background: #3c4147; }
.mono { font-family: "Liberation Mono", monospace; }
```
